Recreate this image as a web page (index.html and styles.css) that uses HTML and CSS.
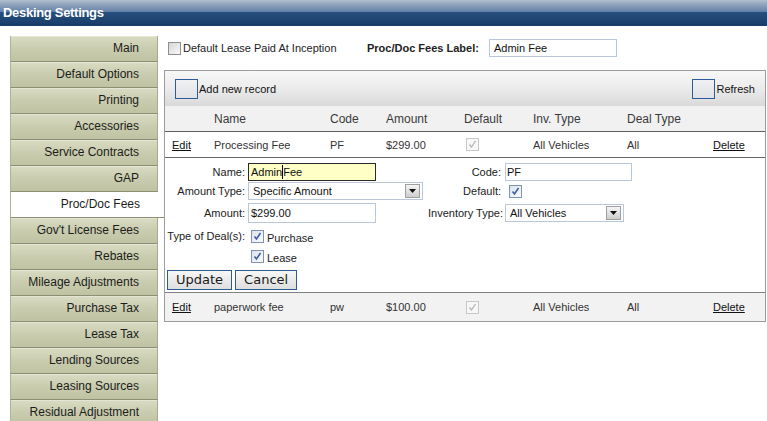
FILE: index.html
```html
<!DOCTYPE html>
<html>
<head>
<meta charset="utf-8">
<title>Desking Settings</title>
<link rel="stylesheet" href="styles.css">
</head>
<body>
<header class="titlebar">Desking Settings</header>
<div class="layout">
  <nav class="sidenav">
    <a class="nav-item">Main</a>
    <a class="nav-item">Default Options</a>
    <a class="nav-item">Printing</a>
    <a class="nav-item">Accessories</a>
    <a class="nav-item">Service Contracts</a>
    <a class="nav-item">GAP</a>
    <a class="nav-item active">Proc/Doc Fees</a>
    <a class="nav-item">Gov't License Fees</a>
    <a class="nav-item">Rebates</a>
    <a class="nav-item">Mileage Adjustments</a>
    <a class="nav-item">Purchase Tax</a>
    <a class="nav-item">Lease Tax</a>
    <a class="nav-item">Lending Sources</a>
    <a class="nav-item">Leasing Sources</a>
    <a class="nav-item">Residual Adjustment</a>
  </nav>
  <main class="content">
    <div class="toprow">
      <label class="opt"><span class="cb cb-off"></span><span class="opt-text">Default Lease Paid At Inception</span></label>
      <span class="lbl-bold">Proc/Doc Fees Label:</span>
      <span class="txt txt-label">Admin Fee</span>
    </div>
    <div class="grid">
      <div class="toolbar">
        <span class="tb-btn"><span class="tb-icon"></span>Add new record</span>
        <span class="tb-btn"><span class="tb-icon"></span>Refresh</span>
      </div>
      <div class="row head">
        <span></span><span>Name</span><span>Code</span><span>Amount</span><span>Default</span><span>Inv. Type</span><span>Deal Type</span><span></span>
      </div>
      <div class="row data">
        <span><a class="lnk">Edit</a></span>
        <span>Processing Fee</span>
        <span>PF</span>
        <span>$299.00</span>
        <span><span class="cb cb-dis"><svg width="11" height="11" viewBox="0 0 11 11"><path d="M2.5 5.5 L4.5 8 L8.5 2" fill="none" stroke="#b4b4b4" stroke-width="1.3"/></svg></span></span>
        <span>All Vehicles</span>
        <span>All</span>
        <span><a class="lnk">Delete</a></span>
      </div>
      <div class="editform">
        <span class="flabel">Name:</span>
        <span class="ffield"><span class="txt txt-name">Admin<span class="caret"></span> Fee</span></span>
        <span class="flabel r">Code:</span>
        <span class="ffield r"><span class="txt txt-code">PF</span></span>

        <span class="flabel">Amount Type:</span>
        <span class="ffield"><span class="select sel-amt"><span>Specific Amount</span><span class="arrow"><svg width="7" height="4" viewBox="0 0 7 4"><polygon points="0,0 7,0 3.5,4" fill="#111"/></svg></span></span></span>
        <span class="flabel r">Default:</span>
        <span class="ffield r"><span class="cb cb-on cb-default"><svg width="11" height="11" viewBox="0 0 11 11"><path d="M2.5 5.5 L4.5 8 L8.5 2" fill="none" stroke="#3d60a6" stroke-width="1.6"/></svg></span></span>

        <span class="flabel">Amount:</span>
        <span class="ffield"><span class="txt txt-amt">$299.00</span></span>
        <span class="flabel r">Inventory Type:</span>
        <span class="ffield r"><span class="select sel-inv"><span>All Vehicles</span><span class="arrow"><svg width="7" height="4" viewBox="0 0 7 4"><polygon points="0,0 7,0 3.5,4" fill="#111"/></svg></span></span></span>

        <span class="flabel">Type of Deal(s):</span>
        <span class="ffield deal"><span class="cb cb-on"><svg width="11" height="11" viewBox="0 0 11 11"><path d="M2.5 5.5 L4.5 8 L8.5 2" fill="none" stroke="#3d60a6" stroke-width="1.6"/></svg></span><span class="deal-text">Purchase</span></span>
        <span class="ffield deal"><span class="cb cb-on"><svg width="11" height="11" viewBox="0 0 11 11"><path d="M2.5 5.5 L4.5 8 L8.5 2" fill="none" stroke="#3d60a6" stroke-width="1.6"/></svg></span><span class="deal-text">Lease</span></span>

        <div class="actions">
          <span class="btn">Update</span>
          <span class="btn">Cancel</span>
        </div>
      </div>
      <div class="row data alt">
        <span><a class="lnk">Edit</a></span>
        <span>paperwork fee</span>
        <span>pw</span>
        <span>$100.00</span>
        <span><span class="cb cb-dis"><svg width="11" height="11" viewBox="0 0 11 11"><path d="M2.5 5.5 L4.5 8 L8.5 2" fill="none" stroke="#b4b4b4" stroke-width="1.3"/></svg></span></span>
        <span>All Vehicles</span>
        <span>All</span>
        <span><a class="lnk">Delete</a></span>
      </div>
    </div>
  </main>
</div>
</body>
</html>
```
FILE: styles.css
```css
html, body {
  margin: 0;
  padding: 0;
  overflow: hidden;
  background: #fff;
}
body {
  font-family: "Liberation Sans", Arial, sans-serif;
  font-size: 11px;
  color: #222;
}

.titlebar {
  height: 26px;
  line-height: 25px;
  padding-left: 3px;
  font-weight: bold;
  font-size: 13px;
  letter-spacing: -0.3px;
  color: #fff;
  background: linear-gradient(to bottom, #b3bfcd 0%, #8fa3bc 18%, #6684aa 44%, #27507f 48%, #1f4573 75%, #183b67 100%);
}

.layout {
  display: flex;
  padding-top: 10px;
  padding-left: 10px;
}

.sidenav {
  width: 148px;
  flex: none;
  display: flex;
  flex-direction: column;
}
.nav-item {
  display: block;
  box-sizing: border-box;
  height: 26px;
  line-height: 25px;
  padding-right: 18px;
  text-align: right;
  font-size: 12px;
  color: #1c1c1c;
  background: linear-gradient(to bottom, #d9dcc3 0%, #c9ccae 50%, #bfc3a2 100%);
  border-left: 1px solid #b0b394;
  border-right: 1px solid #a7aa8b;
  border-bottom: 1px solid #8c8f73;
  box-shadow: inset 0 1px 0 #e4e6d3;
}
.nav-item.active {
  background: #fff;
  box-shadow: none;
  margin-right: -6px;
  border-right: none;
  padding-right: 24px;
}

.content {
  margin-left: 6px;
  width: 602px;
  flex: none;
}

.toprow {
  height: 24px;
  display: flex;
  align-items: center;
  margin-bottom: 10px;
}
.opt {
  display: flex;
  align-items: center;
  width: 199px;
  padding-left: 4px;
}
.opt-text {
  margin-left: 2px;
}
.lbl-bold {
  font-weight: bold;
  margin-left: 0;
  width: 122px;
}

.cb {
  display: inline-block;
  box-sizing: border-box;
  width: 13px;
  height: 13px;
  border: 1px solid #8e8e8e;
  background: linear-gradient(135deg, #d6d6d6, #f8f8f8);
  vertical-align: middle;
  flex: none;
}
.cb svg { display: block; }
.cb-on {
  border-color: #7f93b3;
  background: linear-gradient(135deg, #dbe1ec, #fcfcfd);
}
.cb-dis {
  border-color: #c8c8c8;
  background: #f7f7f7;
}

.txt {
  display: inline-flex;
  align-items: center;
  box-sizing: border-box;
  border: 1px solid #b9c7d9;
  background: #fff;
  padding-left: 4px;
  height: 18px;
  font-size: 11px;
  color: #111;
}
.txt-label { width: 128px; }
.txt-name {
  width: 128px;
  border-color: #2a2a2a;
  background: #ffffc6;
  padding-left: 2px;
}
.caret {
  display: inline-block;
  width: 0;
  height: 14px;
  border-left: 1px solid #000;
}
.txt-code { width: 127px; padding-left: 1px; }
.txt-amt { width: 128px; height: 20px; padding-left: 2px; }

.grid {
  border: 1px solid #9c9c9c;
}
.toolbar {
  height: 35px;
  display: flex;
  align-items: center;
  justify-content: space-between;
  padding: 0 10px;
  background: linear-gradient(to bottom, #f8f8f8 0%, #ebebeb 50%, #d9d9d9 100%);
}
.tb-btn {
  display: flex;
  align-items: center;
  font-size: 11px;
  color: #111;
}
.tb-icon {
  display: inline-block;
  box-sizing: border-box;
  width: 23px;
  height: 20px;
  margin-right: 1px;
  border: 1px solid #2e5c99;
  background: linear-gradient(to bottom, #f0f1f3, #dfe1e4);
}

.row {
  display: grid;
  grid-template-columns: 41px 116px 56px 78px 69px 94px 86px 1fr;
  align-items: center;
}
.row > span {
  padding-left: 8px;
  white-space: nowrap;
}
.row > span:first-child { padding-left: 7px; }
.row.head {
  height: 25px;
  background: #f1f1f1;
  border-bottom: 1px solid #5e5e5e;
  font-size: 12px;
  color: #3a3a3a;
}
.row.data {
  height: 25px;
  border-bottom: 1px solid #666;
  color: #333;
}
.row.data .cb { margin-left: 2px; }
.row.data.alt {
  height: 28px;
  background: #f2f2f2;
  border-bottom: none;
}
.lnk {
  color: #111;
  text-decoration: underline;
}

.editform {
  display: grid;
  grid-template-columns: 83px 180px 77px 1fr;
  grid-template-rows: 19px 20px 24px 22px 19px 26px;
  align-items: center;
  padding-top: 4px;
  border-bottom: 1px solid #808080;
  color: #222;
}
.flabel {
  grid-column: 1;
  text-align: right;
  padding-right: 3px;
  white-space: nowrap;
}
.flabel.r {
  grid-column: 3;
  padding-right: 4px;
}
.ffield {
  grid-column: 2;
  display: flex;
  align-items: center;
}
.ffield.r { grid-column: 4; }
.cb-default { margin-left: 4px; }
.deal .cb { margin-left: 3px; }
.deal-text { margin-left: 3px; padding-top: 3px; }

.select {
  display: flex;
  align-items: center;
  justify-content: space-between;
  box-sizing: border-box;
  height: 18px;
  border: 1px solid #b9c7d9;
  padding-left: 4px;
  background: #fff;
  color: #111;
}
.sel-amt { width: 175px; }
.sel-inv { width: 119px; }
.arrow {
  display: flex;
  align-items: center;
  justify-content: center;
  box-sizing: border-box;
  width: 15px;
  height: 14px;
  margin-right: 2px;
  border: 1px solid #a0a0a0;
  background: linear-gradient(to bottom, #f5f5f5, #cdcdcd);
}

.actions {
  grid-column: 1 / -1;
  align-self: start;
  display: flex;
  gap: 3px;
  padding-left: 2px;
  padding-top: 4px;
}
.btn {
  box-sizing: border-box;
  height: 20px;
  line-height: 18px;
  padding: 0 8px;
  border: 1px solid #2c5a94;
  background: linear-gradient(to bottom, #f7f7f7, #dedede);
  font-family: "DejaVu Sans", Verdana, sans-serif;
  font-size: 13px;
  color: #1a1a1a;
}
```
